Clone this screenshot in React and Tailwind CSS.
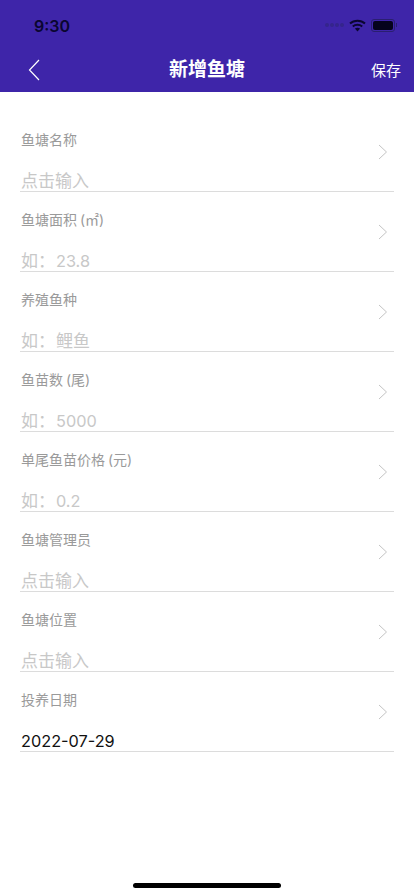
import React from "react";

const FONT = "font-['Inter','Noto_Sans_CJK_SC',sans-serif]";

const rows = [
  { label: "鱼塘名称", value: "点击输入" },
  { label: "鱼塘面积", unit: "(㎡)", prefix: "如：", value: "23.8" },
  { label: "养殖鱼种", prefix: "如：", value: "鲤鱼" },
  { label: "鱼苗数", unit: "(尾)", prefix: "如：", value: "5000" },
  { label: "单尾鱼苗价格", unit: "(元)", prefix: "如：", value: "0.2" },
  { label: "鱼塘管理员", value: "点击输入" },
  { label: "鱼塘位置", value: "点击输入" },
  { label: "投养日期", value: "2022-07-29", filled: true },
];

function StatusIcons() {
  return (
    <div className="flex items-center -mr-[3px]">
      <div className="flex gap-[1px] mr-[5px]">
        {[0, 1, 2, 3].map((i) => (
          <span key={i} className="w-[4px] h-[4px] rounded-full bg-[#35258c]" />
        ))}
      </div>
      <svg width="17" height="13" viewBox="0 0 17 13" fill="none" className="mr-[5px]">
        <path d="M1 4.6C5 .9 12 .9 16 4.6" stroke="#0a0630" strokeWidth="2" />
        <path d="M3.8 7.5c2.6-2.2 6.8-2.2 9.4 0" stroke="#0a0630" strokeWidth="2" />
        <path d="M5.9 9.6c1.5-1.1 3.7-1.1 5.2 0L8.5 12.4z" fill="#0a0630" />
      </svg>
      <div className="w-[24px] h-[13px] rounded-[3px] border border-[#2a1f70] p-[1px]">
        <div className="w-full h-full rounded-[2px] bg-[#05031c]" />
      </div>
      <span className="w-[1px] h-[4px] bg-[#2a1f70] ml-[1px]" />
    </div>
  );
}

function FormRow({ label, unit, prefix, value, filled }) {
  return (
    <div className="h-[80px] relative">
      <div className="pt-[18px] pl-[1px] text-[14px] leading-[20px] text-[#9a9a9a]">
        {label}
        {unit && <span className="ml-[3px]">{unit}</span>}
      </div>
      <svg width="10" height="16" viewBox="0 0 10 16" fill="none" className="absolute right-[6px] top-[32px]">
        <path d="M1 1l7.5 7L1 15" stroke="#c4c4c4" strokeWidth="1" />
      </svg>
      <div className="absolute left-0 right-0 bottom-0 h-[30px] pl-[1px] border-b border-[#dcdcdc] flex items-end">
        <span className={`text-[16.3px] leading-[20px] ${filled ? "text-[#111111]" : "text-[#c8c8c8]"}`}>
          {prefix && <span className="text-[17px] mr-[1px]">{prefix}</span>}
          <span className={/^[\d.-]+$/.test(value) ? "" : "text-[17px]"}>{value}</span>
        </span>
      </div>
    </div>
  );
}

export default function App() {
  return (
    <div className={`w-[414px] h-[896px] bg-white relative overflow-hidden ${FONT}`}>
      <header className="h-[92px] bg-[#3e25a9] px-[20px] text-white">
        <div className="h-[50px] flex items-center justify-between pl-[14px]">
          <span className="text-[16px] font-semibold text-[#0a0630] mt-[2px]">9:30</span>
          <StatusIcons />
        </div>
        <div className="relative h-[42px] flex items-center justify-between">
          <svg width="12" height="22" viewBox="0 0 12 22" fill="none" className="ml-[8px] mb-[2px]">
            <path d="M11 1L1.5 11 11 21" stroke="#ffffff" strokeWidth="1.2" />
          </svg>
          <h1 className="absolute left-0 right-0 text-center text-[19px] font-semibold mb-[2px]">新增鱼塘</h1>
          <button type="button" className="text-[15px] -mr-[7px]">保存</button>
        </div>
      </header>
      <main className="pl-[20px] pr-[20px] pt-[20px]">
        {rows.map((row) => (
          <FormRow key={row.label} {...row} />
        ))}
      </main>
      <div className="absolute bottom-[8px] left-[133px] w-[148px] h-[5px] rounded-full bg-black" />
    </div>
  );
}
